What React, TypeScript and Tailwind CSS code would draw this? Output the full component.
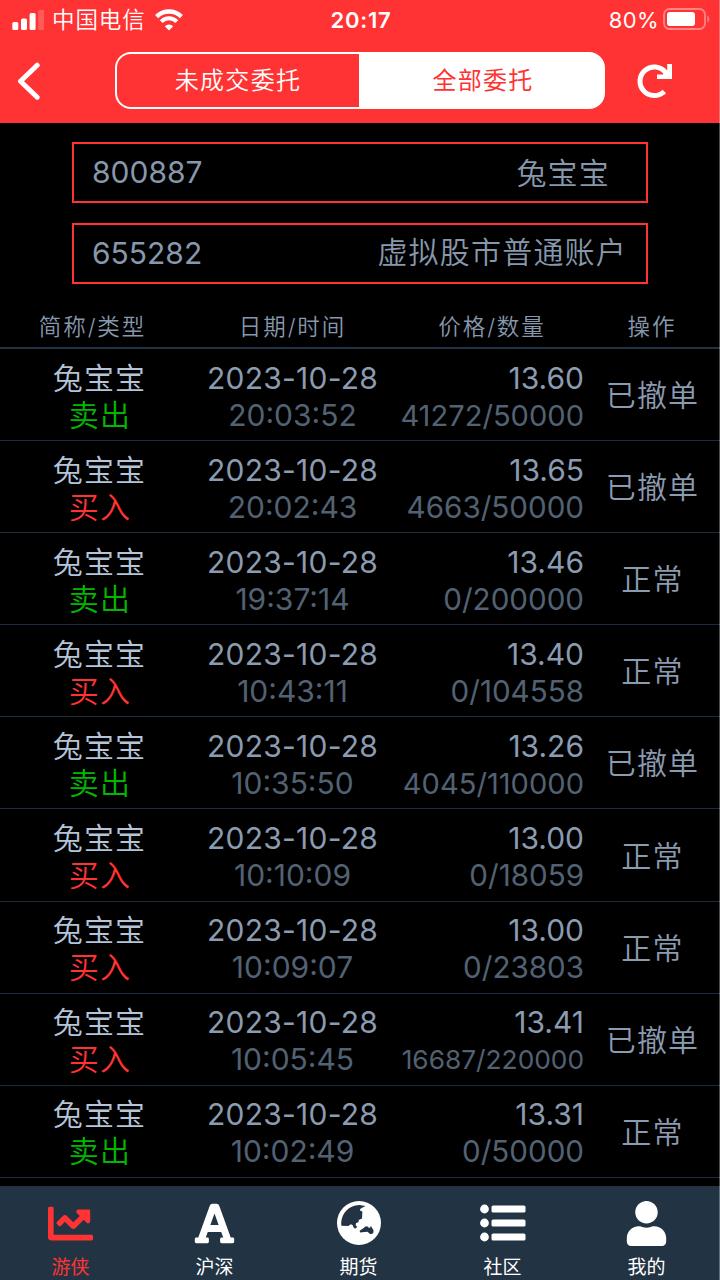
import type { ReactNode } from "react";
import { FaChartLine, FaFont, FaUser } from "react-icons/fa";

type Order = {
  side: "buy" | "sell";
  time: string;
  price: string;
  amount: string;
  status: string;
};

const ORDERS: Order[] = [
  { side: "sell", time: "20:03:52", price: "13.60", amount: "41272/50000", status: "已撤单" },
  { side: "buy", time: "20:02:43", price: "13.65", amount: "4663/50000", status: "已撤单" },
  { side: "sell", time: "19:37:14", price: "13.46", amount: "0/200000", status: "正常" },
  { side: "buy", time: "10:43:11", price: "13.40", amount: "0/104558", status: "正常" },
  { side: "sell", time: "10:35:50", price: "13.26", amount: "4045/110000", status: "已撤单" },
  { side: "buy", time: "10:10:09", price: "13.00", amount: "0/18059", status: "正常" },
  { side: "buy", time: "10:09:07", price: "13.00", amount: "0/23803", status: "正常" },
  { side: "buy", time: "10:05:45", price: "13.41", amount: "16687/220000", status: "已撤单" },
  { side: "sell", time: "10:02:49", price: "13.31", amount: "0/50000", status: "正常" },
];

// long amounts shrink to stay inside the column
function amountSize(amount: string) {
  if (amount.length > 11) return "text-[26.3px]";
  if (amount.length > 10) return "text-[29.1px]";
  return "text-[29.6px]";
}

function StatusBar() {
  return (
    <div className="grid h-10 grid-cols-3 items-center pl-3 pr-[10px] text-white">
      <div className="flex items-center">
        <svg width="32" height="20" viewBox="0 0 32 20" fill="currentColor">
          <rect x="0.3" y="12" width="6" height="8" rx="1.5" />
          <rect x="9" y="8.5" width="6" height="11.5" rx="1.5" />
          <rect x="17.6" y="3" width="6" height="17" rx="1.5" />
          <rect x="26.2" y="0" width="6" height="20" rx="1.5" opacity="0.2" />
        </svg>
        <span className="ml-[8px] text-[22.5px] font-[350] leading-10 tracking-[0.9px]">中国电信</span>
        <svg className="ml-[9px]" width="28" height="22" viewBox="0 0 28 22" fill="none" stroke="currentColor">
          <path d="M1.6 7.6a17.6 17.6 0 0 1 24.8 0" strokeWidth="4.3" />
          <path d="M6.2 12.6a11 11 0 0 1 15.6 0" strokeWidth="4" />
          <path d="M14 21.5 9.8 17.2a6 6 0 0 1 8.4 0Z" fill="currentColor" stroke="none" />
        </svg>
      </div>
      <div className="text-center text-[22px] font-semibold tracking-[0.8px]">20:17</div>
      <div className="flex items-center justify-end">
        <span className="text-[22px] tracking-[0.4px]">80%</span>
        <svg className="ml-1 -mt-0.5" width="47" height="22" viewBox="0 0 47 22">
          <rect x="1" y="1" width="41" height="20" rx="5.5" fill="none" stroke="#fff" strokeOpacity="0.4" strokeWidth="1.8" />
          <rect x="4" y="4" width="28" height="14" rx="3" fill="#fff" />
          <path d="M44.4 7.5c2.4 1 2.4 6 0 7Z" fill="#fff" fillOpacity="0.4" />
        </svg>
      </div>
    </div>
  );
}

function Header() {
  return (
    <header className="h-[123px] bg-[#ff3333]">
      <StatusBar />
      <div className="flex items-center pt-3">
        <svg className="ml-[17px]" width="24" height="38" viewBox="0 0 24 38" fill="none" stroke="#fff" strokeWidth="5" strokeLinecap="round" strokeLinejoin="round">
          <path d="M20.2 3.2 3.5 19.3 20.2 35.2" />
        </svg>
        <div className="ml-[74px] flex h-[57px] w-[490px] rounded-[16px] border-2 border-white bg-[linear-gradient(90deg,transparent_242px,white_242px)] text-[24px] leading-[54px] tracking-[1.3px]">
          <div className="w-[242px] text-center font-[350] text-white">未成交委托</div>
          <div className="flex-1 pl-1 text-center text-[#ff3333]">全部委托</div>
        </div>
        <svg className="ml-8" width="36" height="36" viewBox="0 0 36 36" fill="none" stroke="#fff">
          <path d="M27.3 28.5A14.3 14.3 0 1 1 28.5 9.4L31 12.5" strokeWidth="5" />
          <path d="M35 1v15H20v-4.4h6L30.2 7.5V1Z" fill="#fff" stroke="none" />
        </svg>
      </div>
    </header>
  );
}

function AccountField({ code, children }: { code: string; children: ReactNode }) {
  return (
    <div className="flex h-[61px] items-center justify-between border-2 border-[#ff3333] pl-[18px] pr-[19px] text-[30px] leading-[57px] text-[#8798ad]">
      <span>{code}</span>
      {children}
    </div>
  );
}

function OrderRow({ order }: { order: Order }) {
  return (
    <div className="flex h-[92.1px] items-center border-b border-[#1c2c3b] text-[30px] leading-[37px]">
      <div className="w-[199px] pt-[4px] text-center font-[350] tracking-[1.2px]">
        <div className="text-[#b4c4d9]">兔宝宝</div>
        <div className={order.side === "buy" ? "pl-px text-[#ff3333]" : "pl-px text-[#00b800]"}>
          {order.side === "buy" ? "买入" : "卖出"}
        </div>
      </div>
      <div className="w-[187px] pt-[4px] text-center">
        <div className="tracking-[0.25px] text-[#8b9bb0]">2023-10-28</div>
        <div className="text-[#526273]">{order.time}</div>
      </div>
      <div className="w-[198px] pt-[4px] text-right">
        <div className="text-[#8b9bb0]">{order.price}</div>
        <div className={`text-[#526273] ${amountSize(order.amount)}`}>{order.amount}</div>
      </div>
      <div className="flex-1 pl-px pt-0.5 text-center font-[350] tracking-[1.2px] text-[#8b9bb0]">{order.status}</div>
    </div>
  );
}

function GlobeIcon() {
  return (
    <svg width="44" height="44" viewBox="0 0 130 130">
      <circle cx="65" cy="65" r="65" fill="#fff" />
      <path
        d="M13 73C10 38 35 13 66 12L84 15C78 19 66 23 68 28L75 31 74 52 64 56 64 62 56 66 55 72 60 77 54 81 50 80 46 71 41 69 33 74Z"
        fill="#223344"
      />
      <path d="M67 88 80 79 83 75 92 75 93 79 98 79 100 73 108 87 107 95 99 98 90 91 74 92 68 93Z" fill="#223344" />
    </svg>
  );
}

function ListIcon() {
  return (
    <svg width="46" height="38" viewBox="0 0 46 38" fill="#fff">
      {[5, 19, 33].map((y) => (
        <g key={y}>
          <circle cx="4.5" cy={y} r="4.4" />
          <rect x="11.5" y={y - 3.6} width="34" height="7.2" rx="1.6" />
        </g>
      ))}
    </svg>
  );
}

function Tab({ label, active, children }: { label: string; active?: boolean; children: ReactNode }) {
  return (
    <div className={`flex flex-1 flex-col items-center pr-[3px] ${active ? "text-[#ff3333]" : "text-white"}`}>
      <div className="mt-[14px] flex h-[46px] items-center">{children}</div>
      <span className="mt-[10px] text-[19px] leading-6">{label}</span>
    </div>
  );
}

export default function App() {
  return (
    <div className="relative flex h-[1280px] w-[720px] flex-col overflow-hidden bg-black font-['Inter','Noto_Sans_CJK_SC',sans-serif]">
      <Header />
      <div className="flex flex-col gap-5 px-[72px] pt-[19px]">
        <AccountField code="800887">
          <span className="pr-[17px] pt-px font-[350] tracking-[1.2px]">兔宝宝</span>
        </AccountField>
        <AccountField code="655282">
          <span className="-mt-[3px] font-[350] tracking-[1.2px]">虚拟股市普通账户</span>
        </AccountField>
      </div>
      <div className="mt-[22px] flex h-[43px] border-b-2 border-[#1f3347] text-center text-[22.5px] font-[350] leading-[42px] tracking-[1.9px] text-[#8798ad]">
        <div className="w-[185px]">简称/类型</div>
        <div className="w-[215px]">日期/时间</div>
        <div className="w-[184px]">价格/数量</div>
        <div className="flex-1">操作</div>
      </div>
      <div className="min-h-0 flex-1">
        {ORDERS.map((order) => (
          <OrderRow key={order.time} order={order} />
        ))}
      </div>
      <nav className="flex h-[94px] shrink-0 bg-[#223344]">
        <Tab label="游侠" active>
          <FaChartLine size={45} />
        </Tab>
        <Tab label="沪深">
          <FaFont size={45} />
        </Tab>
        <Tab label="期货">
          <GlobeIcon />
        </Tab>
        <Tab label="社区">
          <ListIcon />
        </Tab>
        <Tab label="我的">
          <FaUser size={45} />
        </Tab>
      </nav>
      <div className="absolute inset-y-0 right-0 w-px bg-white/30" />
    </div>
  );
}
